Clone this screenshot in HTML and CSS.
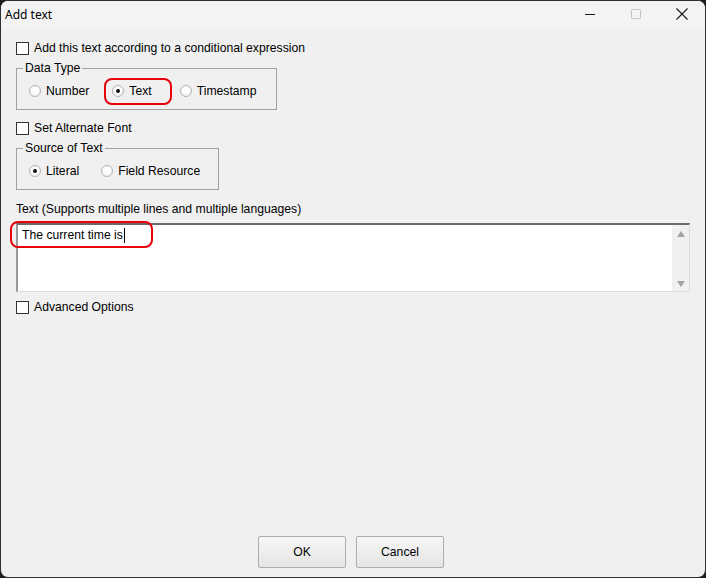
FILE: index.html
```html
<!DOCTYPE html>
<html lang="en">
<head>
  <meta charset="UTF-8" />
  <title>Add text</title>
  <link rel="stylesheet" href="styles.css">
</head>
<body>

  <div class="window">
    <div class="titlebar">
      <div class="title">Add text</div>
      <div class="caption-buttons">
        <span class="cap-btn">
          <svg width="12" height="12" viewBox="0 0 12 12"><path d="M1 6.5h10" stroke="#1a1a1a" stroke-width="1"/></svg>
        </span>
        <span class="cap-btn">
          <svg width="12" height="12" viewBox="0 0 12 12"><rect x="1.5" y="1.5" width="9" height="9" rx="1" fill="none" stroke="#c4c4c4" stroke-width="1"/></svg>
        </span>
        <span class="cap-btn">
          <svg width="12" height="12" viewBox="0 0 12 12"><path d="M0.5 0.5l11 11M11.5 0.5l-11 11" stroke="#1a1a1a" stroke-width="1.1"/></svg>
        </span>
      </div>
    </div>

    <div class="content">
      <label class="check-row first">
        <span class="checkbox"></span>
        <span>Add this text according to a conditional expression</span>
      </label>

      <fieldset class="group data-type">
        <legend>Data Type</legend>
        <div class="radio-row">
          <span class="radio"><span class="dot-box"></span>Number</span>
          <span class="radio gap-text">
            <span class="dot-box checked"></span>Text
            <span class="red-mark"></span>
          </span>
          <span class="radio gap-stamp"><span class="dot-box"></span>Timestamp</span>
        </div>
      </fieldset>

      <label class="check-row alt-font">
        <span class="checkbox"></span>
        <span>Set Alternate Font</span>
      </label>

      <fieldset class="group source">
        <legend>Source of Text</legend>
        <div class="radio-row">
          <span class="radio"><span class="dot-box checked"></span>Literal</span>
          <span class="radio gap-field"><span class="dot-box"></span>Field Resource</span>
        </div>
      </fieldset>

      <div class="field-label">Text (Supports multiple lines and multiple languages)</div>

      <div class="text-box">
        <div class="text-value">The current time is<span class="caret"></span></div>
        <div class="scrollbar">
          <span class="arrow up"></span>
          <span class="arrow down"></span>
        </div>
        <span class="text-mark"></span>
      </div>

      <label class="check-row advanced">
        <span class="checkbox"></span>
        <span>Advanced Options</span>
      </label>

      <div class="spacer"></div>

      <div class="buttons">
        <button class="btn">OK</button>
        <button class="btn">Cancel</button>
      </div>
    </div>
  </div>

</body>
</html>
```

FILE: styles.css
```css
* {
  box-sizing: border-box;
}
html, body {
  margin: 0;
  width: 706px;
  height: 578px;
  overflow: hidden;
  background: #1c1c1c;
}
body {
  font-family: "Liberation Sans", Arial, sans-serif;
  font-size: 12.2px;
  color: #000;
}

.window {
  width: 706px;
  height: 578px;
  border: 1px solid #2e2e2e;
  border-radius: 8px;
  background: #f0f0f0;
  overflow: hidden;
  display: flex;
  flex-direction: column;
}

.titlebar {
  height: 29px;
  background: #f3f3f3;
  display: flex;
  align-items: center;
  justify-content: space-between;
  flex-shrink: 0;
}
.title {
  padding-left: 4px;
  font-family: "Noto Sans", "Liberation Sans", sans-serif;
  font-size: 12px;
  color: #000;
  margin-top: -3px;
}
.caption-buttons {
  display: flex;
  height: 100%;
  margin-top: -3px;
}
.cap-btn {
  width: 46px;
  display: flex;
  align-items: center;
  justify-content: center;
}

.content {
  flex-grow: 1;
  display: flex;
  flex-direction: column;
  padding: 0 15px 9px 15px;
}

.check-row {
  display: flex;
  align-items: center;
  gap: 5px;
  height: 14px;
  line-height: 14px;
}
.check-row.first { margin-top: 11px; }
.check-row.alt-font { margin-top: 11px; }
.check-row.advanced { margin-top: 8px; }
.checkbox {
  width: 13px;
  height: 13px;
  border: 1px solid #333;
  background: #fff;
  flex-shrink: 0;
}

.group {
  margin: 6px 0 0 0;
  padding: 9px 0 11px 12px;
  border: 1px solid #a0a0a0;
  min-width: 0;
}
.group legend {
  padding: 0 2px;
  margin-left: -6px;
  line-height: 14px;
  height: 14px;
}
.data-type { width: 261px; }
.source { width: 203px; }

.radio-row {
  display: flex;
  align-items: center;
  height: 14px;
  line-height: 14px;
}
.radio {
  display: flex;
  align-items: center;
  gap: 5px;
  position: relative;
}
.gap-text { margin-left: 23px; }
.gap-stamp { margin-left: 28px; }
.gap-field { margin-left: 22px; }
.dot-box {
  width: 12px;
  height: 12px;
  border-radius: 50%;
  border: 1px solid #b4b4b4;
  background: radial-gradient(circle at 50% 40%, #ffffff 40%, #e6e6e6 100%);
  position: relative;
  flex-shrink: 0;
}
.dot-box.checked::after {
  content: "";
  position: absolute;
  left: 3px;
  top: 3px;
  width: 4px;
  height: 4px;
  border-radius: 50%;
  background: #111;
}

.red-mark {
  position: absolute;
  left: -8px;
  right: -20px;
  top: -6px;
  bottom: -7px;
  border: 2px solid #e8000b;
  border-radius: 8px;
}

.field-label {
  margin-top: 12px;
  height: 14px;
  line-height: 14px;
}

.text-box {
  position: relative;
  margin-top: 7px;
  width: 674px;
  height: 69px;
  background: #fff;
  border-top: 2px solid #6a6a6a;
  border-left: 2px solid #9a9a9a;
  border-right: 1px solid #dcdcdc;
  border-bottom: 1px solid #dcdcdc;
  display: flex;
}
.text-value {
  flex-grow: 1;
  padding: 3px 0 0 4px;
  line-height: 15px;
}
.caret {
  display: inline-block;
  width: 1px;
  height: 15px;
  background: #000;
  vertical-align: top;
  margin-left: 1px;
}
.scrollbar {
  width: 17px;
  background: #f0f0f0;
  display: flex;
  flex-direction: column;
  justify-content: space-between;
  align-items: center;
  padding: 6px 0 4px 0;
}
.arrow {
  width: 0;
  height: 0;
  border-left: 4.5px solid transparent;
  border-right: 4.5px solid transparent;
}
.arrow.up { border-bottom: 6px solid #a3a3a3; }
.arrow.down { border-top: 6px solid #a3a3a3; }

.text-mark {
  position: absolute;
  left: -8px;
  top: -4px;
  width: 143px;
  height: 27px;
  border: 2px solid #e8000b;
  border-radius: 8px;
}

.spacer {
  flex-grow: 1;
}

.buttons {
  display: flex;
  justify-content: center;
  gap: 10px;
  padding-right: 4px;
}
.btn {
  width: 88px;
  height: 32px;
  border: 1px solid #adadad;
  border-radius: 2px;
  background: linear-gradient(#f6f6f6, #e5e5e5);
  font-family: "Liberation Sans", Arial, sans-serif;
  font-size: 12.2px;
  color: #000;
}
```
